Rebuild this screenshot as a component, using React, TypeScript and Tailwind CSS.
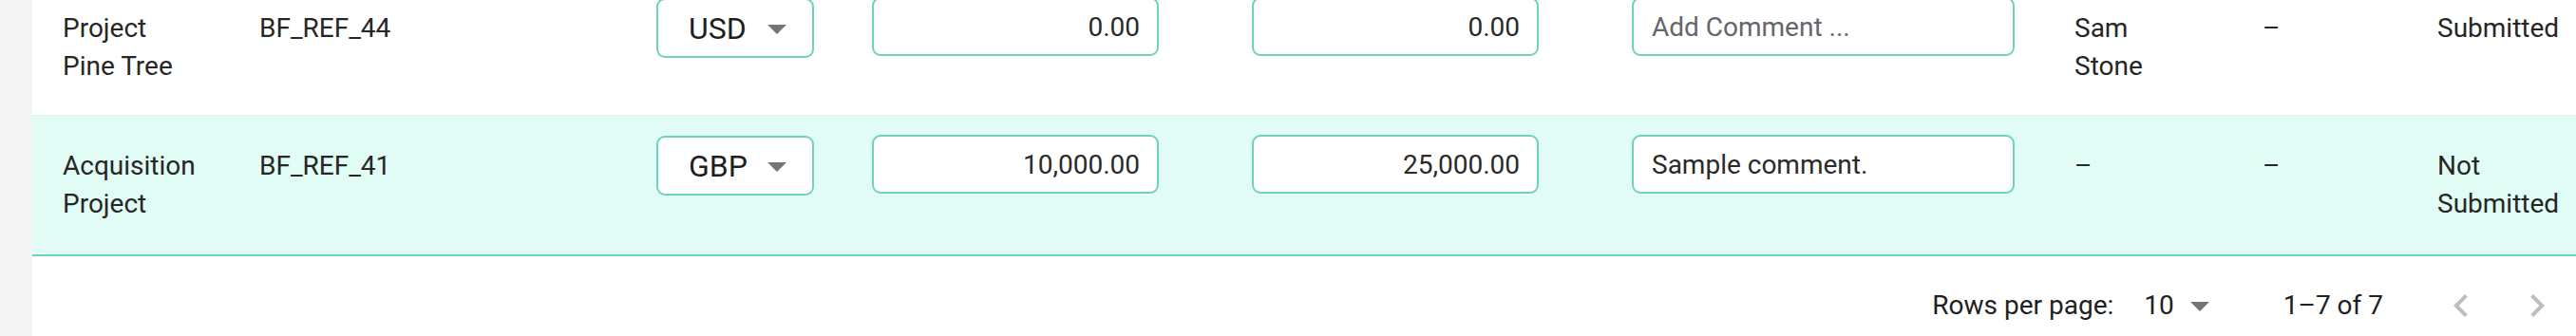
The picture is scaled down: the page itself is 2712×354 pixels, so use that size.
type Row = {
  name: string[];
  reference: string;
  currency: string;
  budget: string;
  forecast: string;
  comment: string;
  assignee: string[];
  reviewer: string;
  status: string[];
  selected: boolean;
};

const rows: Row[] = [
  {
    name: ["Project", "Pine Tree"],
    reference: "BF_REF_44",
    currency: "USD",
    budget: "0.00",
    forecast: "0.00",
    comment: "",
    assignee: ["Sam", "Stone"],
    reviewer: "–",
    status: ["Submitted"],
    selected: false,
  },
  {
    name: ["Acquisition", "Project"],
    reference: "BF_REF_41",
    currency: "GBP",
    budget: "10,000.00",
    forecast: "25,000.00",
    comment: "Sample comment.",
    assignee: ["–"],
    reviewer: "–",
    status: ["Not", "Submitted"],
    selected: true,
  },
];

const ArrowDrop = ({ className = "" }: { className?: string }) => (
  <svg viewBox="0 0 24 24" className={`h-[48px] w-[48px] fill-[#757575] ${className}`}>
    <path d="M7 10l5 5 5-5z" />
  </svg>
);

const TextCell = ({ lines, width }: { lines: string[]; width: string }) => (
  <div className={`${width} shrink-0 px-[32px] pt-[33px]`}>
    {lines.map((line, i) => (
      <div key={i} className="whitespace-nowrap">
        {line}
      </div>
    ))}
  </div>
);

const TableRow = ({ row }: { row: Row }) => (
  <div
    className={`flex items-start ${
      row.selected
        ? "h-[148px] bg-[#e0fcf4] border-b-2 border-[#6dd3bc]"
        : "h-[145px] bg-white border-b border-[#e3f3ee]"
    }`}
  >
    <TextCell lines={row.name} width="w-[207px]" />
    <TextCell lines={[row.reference]} width="w-[418px]" />

    {/* currency */}
    <div className="w-[227px] shrink-0 pl-[32px] pt-[21px]">
      <div className="flex h-[63px] w-[166px] items-center justify-between rounded-[9px] border-2 border-[#6dd3bc] bg-white pl-[32px] pr-[13px] text-[32px] text-[#1f1f1f]">
        <span>{row.currency}</span>
        <ArrowDrop />
      </div>
    </div>

    {/* amounts */}
    {[row.budget, row.forecast].map((value, i) => (
      <div key={i} className="w-[400px] shrink-0 pl-[32px] pt-[20px]">
        <input
          readOnly
          defaultValue={value}
          className="h-[62px] w-[302px] rounded-[9px] border-2 border-[#6dd3bc] bg-white px-[18px] text-right font-['Roboto'] text-[28px] text-[#2a2a2a] outline-none"
        />
      </div>
    ))}

    {/* comment */}
    <div className="w-[466px] shrink-0 pl-[32px] pt-[20px]">
      <input
        readOnly
        defaultValue={row.comment}
        placeholder="Add Comment ..."
        className="h-[62px] w-[403px] rounded-[9px] border-2 border-[#6dd3bc] bg-white px-[19px] font-['Roboto'] text-[28px] text-[#2a2a2a] outline-none placeholder:text-[#63666b]"
      />
    </div>

    <TextCell lines={row.assignee} width="w-[198px]" />
    <TextCell lines={[row.reviewer]} width="w-[184px]" />
    <TextCell lines={row.status} width="w-[210px]" />
  </div>
);

export default function App() {
  return (
    <div className="flex h-[354px] w-[2712px] overflow-hidden bg-[#f4f4f4] font-['Roboto',sans-serif] text-[28px] leading-[40px] text-[#262626]">
      <div className="w-[34px] shrink-0" />
      <div className="-mt-[23px] flex-1 overflow-hidden bg-white">
        {rows.map((row) => (
          <TableRow key={row.reference} row={row} />
        ))}

        {/* pagination */}
        <div className="flex h-[104px] items-center justify-end pr-[1px] text-[#212121]">
          <span>Rows per page:</span>
          <div className="ml-[16px] mr-[64px] flex items-center pl-[16px]">
            <span>10</span>
            <ArrowDrop className="ml-[3px]" />
          </div>
          <span>1–7 of 7</span>
          <div className="ml-[42px] flex">
            <button className="flex h-[80px] w-[80px] items-center justify-center" disabled>
              <svg viewBox="0 0 24 24" className="h-[48px] w-[48px] fill-[#bdbdbd]">
                <path d="M15.41 16.59 10.83 12l4.58-4.59L14 6l-6 6 6 6z" />
              </svg>
            </button>
            <button className="flex h-[80px] w-[80px] items-center justify-center" disabled>
              <svg viewBox="0 0 24 24" className="h-[48px] w-[48px] fill-[#bdbdbd]">
                <path d="M8.59 16.59 13.17 12 8.59 7.41 10 6l6 6-6 6z" />
              </svg>
            </button>
          </div>
        </div>
      </div>
    </div>
  );
}
